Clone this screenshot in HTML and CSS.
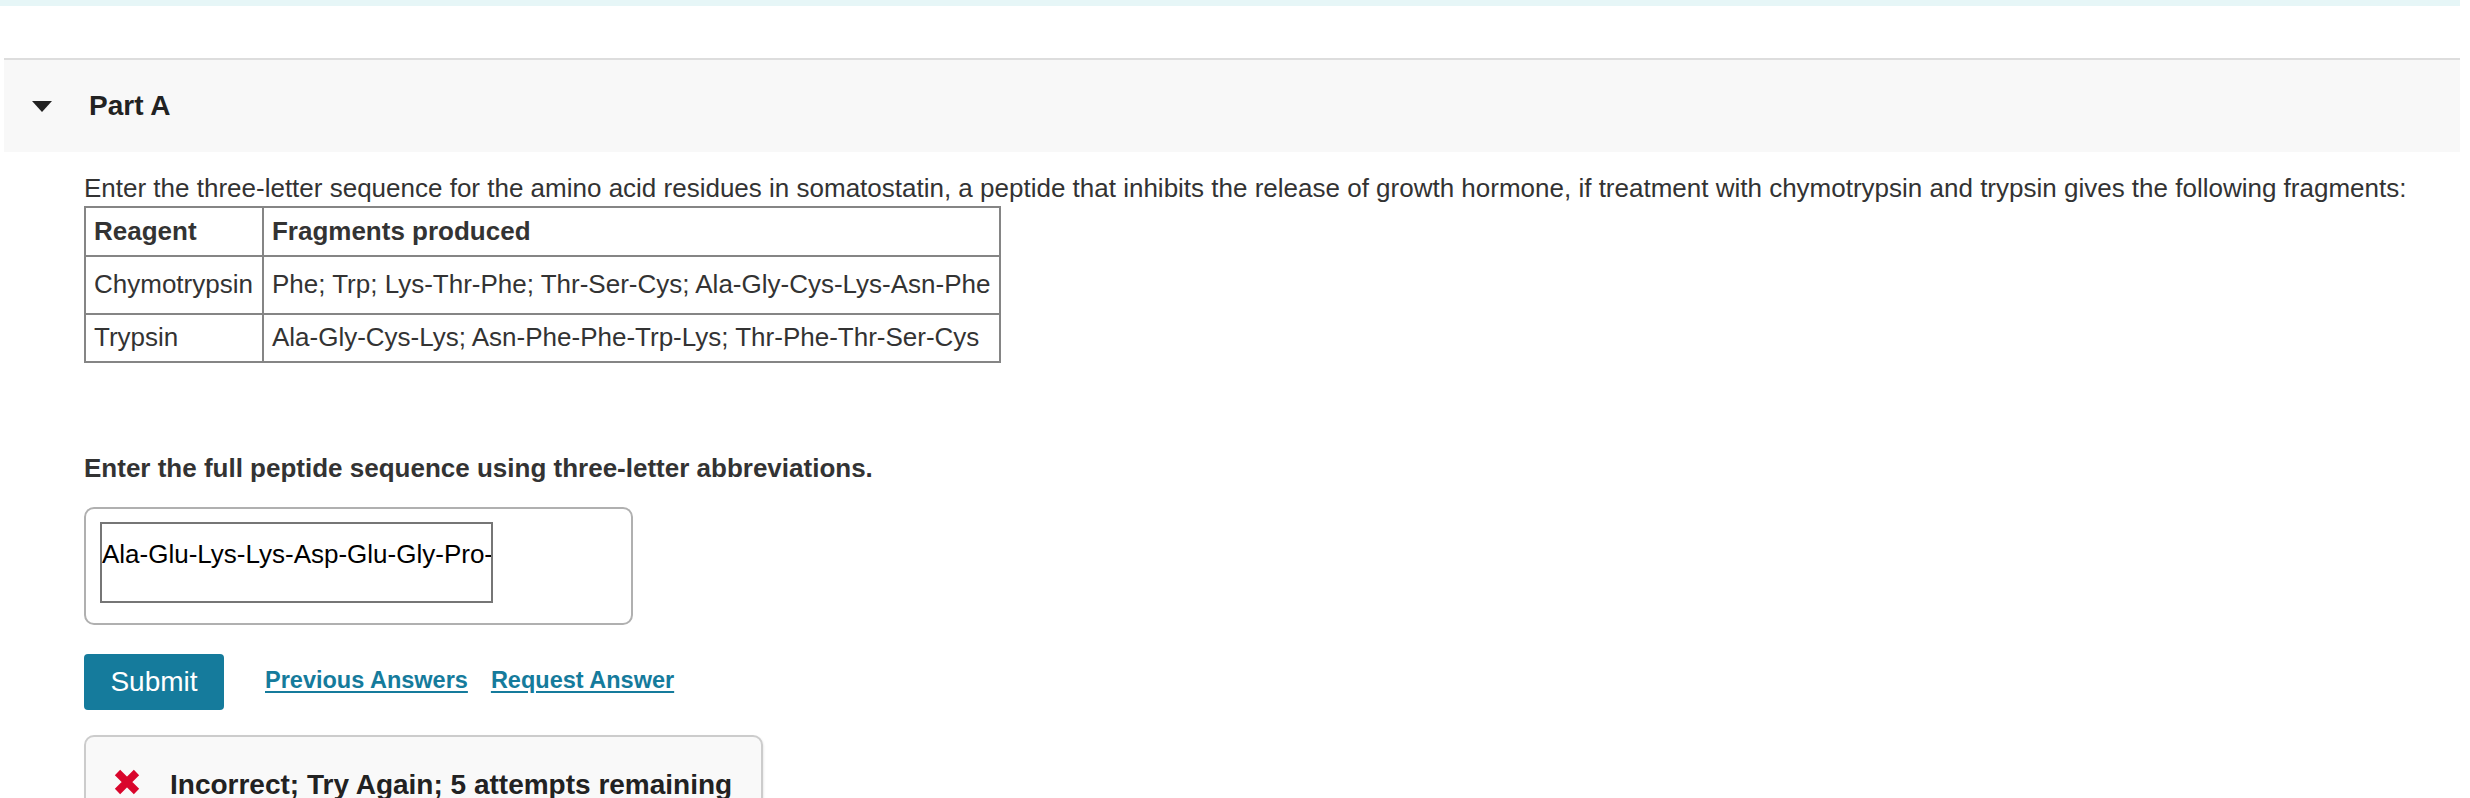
FILE: index.html
```html
<!DOCTYPE html>
<html lang="en">
<head>
<meta charset="utf-8">
<title>Part A</title>
<link rel="stylesheet" href="styles.css">
</head>
<body>
<div class="topbar"></div>
<section class="part">
  <div class="part-header">
    <span class="caret"></span>
    <h2 class="part-title">Part A</h2>
  </div>
  <div class="part-body">
    <p class="prompt">Enter the three-letter sequence for the amino acid residues in somatostatin, a peptide that inhibits the release of growth hormone, if treatment with chymotrypsin and trypsin gives the following fragments:</p>
    <table class="frag-table">
      <tr class="row-head"><th>Reagent</th><th>Fragments produced</th></tr>
      <tr class="row-mid"><td>Chymotrypsin</td><td>Phe; Trp; Lys-Thr-Phe; Thr-Ser-Cys; Ala-Gly-Cys-Lys-Asn-Phe</td></tr>
      <tr class="row-last"><td>Trypsin</td><td>Ala-Gly-Cys-Lys; Asn-Phe-Phe-Trp-Lys; Thr-Phe-Thr-Ser-Cys</td></tr>
    </table>
    <p class="question">Enter the full peptide sequence using three-letter abbreviations.</p>
    <div class="answer-box">
      <input class="answer-input" type="text" value="Ala-Glu-Lys-Lys-Asp-Glu-Gly-Pro-Thr-Ser-Cys" readonly>
    </div>
    <div class="actions">
      <button class="submit" type="button">Submit</button>
      <a class="action-link" href="#">Previous Answers</a>
      <a class="action-link second" href="#">Request Answer</a>
    </div>
    <div class="feedback">
      <svg class="x-icon" width="26" height="26" viewBox="0 0 26 26" aria-hidden="true">
        <path d="M3.5 3.5 L22.5 22.5 M22.5 3.5 L3.5 22.5" stroke="#d9062c" stroke-width="7.5" fill="none"/>
      </svg>
      <span class="feedback-text">Incorrect; Try Again; 5 attempts remaining</span>
    </div>
  </div>
</section>
</body>
</html>
```

FILE: styles.css
```css
html, body {
  margin: 0;
  padding: 0;
  background: #ffffff;
}

body {
  font-family: "Liberation Sans", Arial, Helvetica, sans-serif;
  color: #333333;
  width: 2460px;
}

.topbar {
  height: 6px;
  background: #e6f6f7;
}

.part {
  margin-top: 52px;
}

.part-header {
  margin-left: 4px;
  height: 92px;
  border-top: 2px solid #dddddd;
  background: #f8f8f8;
  display: flex;
  align-items: center;
  padding-left: 28px;
}

.caret {
  width: 0;
  height: 0;
  border-left: 10.5px solid transparent;
  border-right: 10.5px solid transparent;
  border-top: 11px solid #222222;
  margin-right: 37px;
}

.part-title {
  margin: 0;
  font-size: 28px;
  line-height: 1;
  font-weight: bold;
  color: #222222;
}

.part-body {
  padding-left: 84px;
}

.prompt {
  margin: 21px 0 3px;
  font-size: 26px;
  line-height: 30px;
  white-space: nowrap;
  color: #333333;
}

.frag-table {
  border-collapse: collapse;
  border: 2px solid #2b2b2b;
  font-size: 26px;
  line-height: 30px;
  color: #333333;
}

.frag-table th,
.frag-table td {
  border: 2px solid #858585;
  text-align: left;
  padding: 0 9px 0 8px;
  white-space: nowrap;
}

.frag-table th {
  font-weight: bold;
}

.row-head th {
  padding-top: 8px;
  padding-bottom: 9px;
}

.row-mid td {
  padding-top: 12px;
  padding-bottom: 14px;
}

.row-last td {
  padding-top: 7px;
  padding-bottom: 9px;
}

.question {
  margin: 90px 0 24px;
  font-size: 26px;
  line-height: 30px;
  font-weight: bold;
  color: #333333;
}

.answer-box {
  box-sizing: border-box;
  width: 549px;
  height: 118px;
  border: 2px solid #b0b0b0;
  border-radius: 10px;
  padding: 13px 14px;
}

.answer-input {
  box-sizing: border-box;
  display: block;
  width: 393px;
  height: 81px;
  margin: 0;
  border: 2px solid #767676;
  border-radius: 0;
  padding: 15px 0 32px 0;
  font-family: "Liberation Sans", Arial, Helvetica, sans-serif;
  font-size: 26px;
  line-height: 30px;
  color: #000000;
  background: #ffffff;
  outline: none;
}

.actions {
  margin-top: 29px;
  display: flex;
  align-items: center;
}

.submit {
  width: 140px;
  height: 56px;
  border: none;
  border-radius: 4px;
  background: #157b9c;
  color: #ffffff;
  font-family: "Liberation Sans", Arial, Helvetica, sans-serif;
  font-size: 28px;
  padding: 0;
  margin-right: 41px;
}

.action-link {
  font-size: 23.5px;
  font-weight: bold;
  color: #157b9c;
  text-decoration: underline;
  text-decoration-thickness: 2px;
  text-underline-offset: 3px;
  margin-bottom: 4px;
}

.action-link.second {
  margin-left: 23px;
}

.feedback {
  box-sizing: border-box;
  margin-top: 25px;
  width: 679px;
  height: 120px;
  border: 2px solid #cccccc;
  border-radius: 10px;
  background: #f9f9f9;
  box-shadow: 1px 1px 2px rgba(0, 0, 0, 0.08);
  padding: 32px 30px 20px 28px;
  display: flex;
  align-items: flex-start;
}

.x-icon {
  flex: none;
  margin-right: 30px;
}

.feedback-text {
  font-size: 28px;
  line-height: 32px;
  font-weight: bold;
  color: #222222;
  white-space: nowrap;
}
```
